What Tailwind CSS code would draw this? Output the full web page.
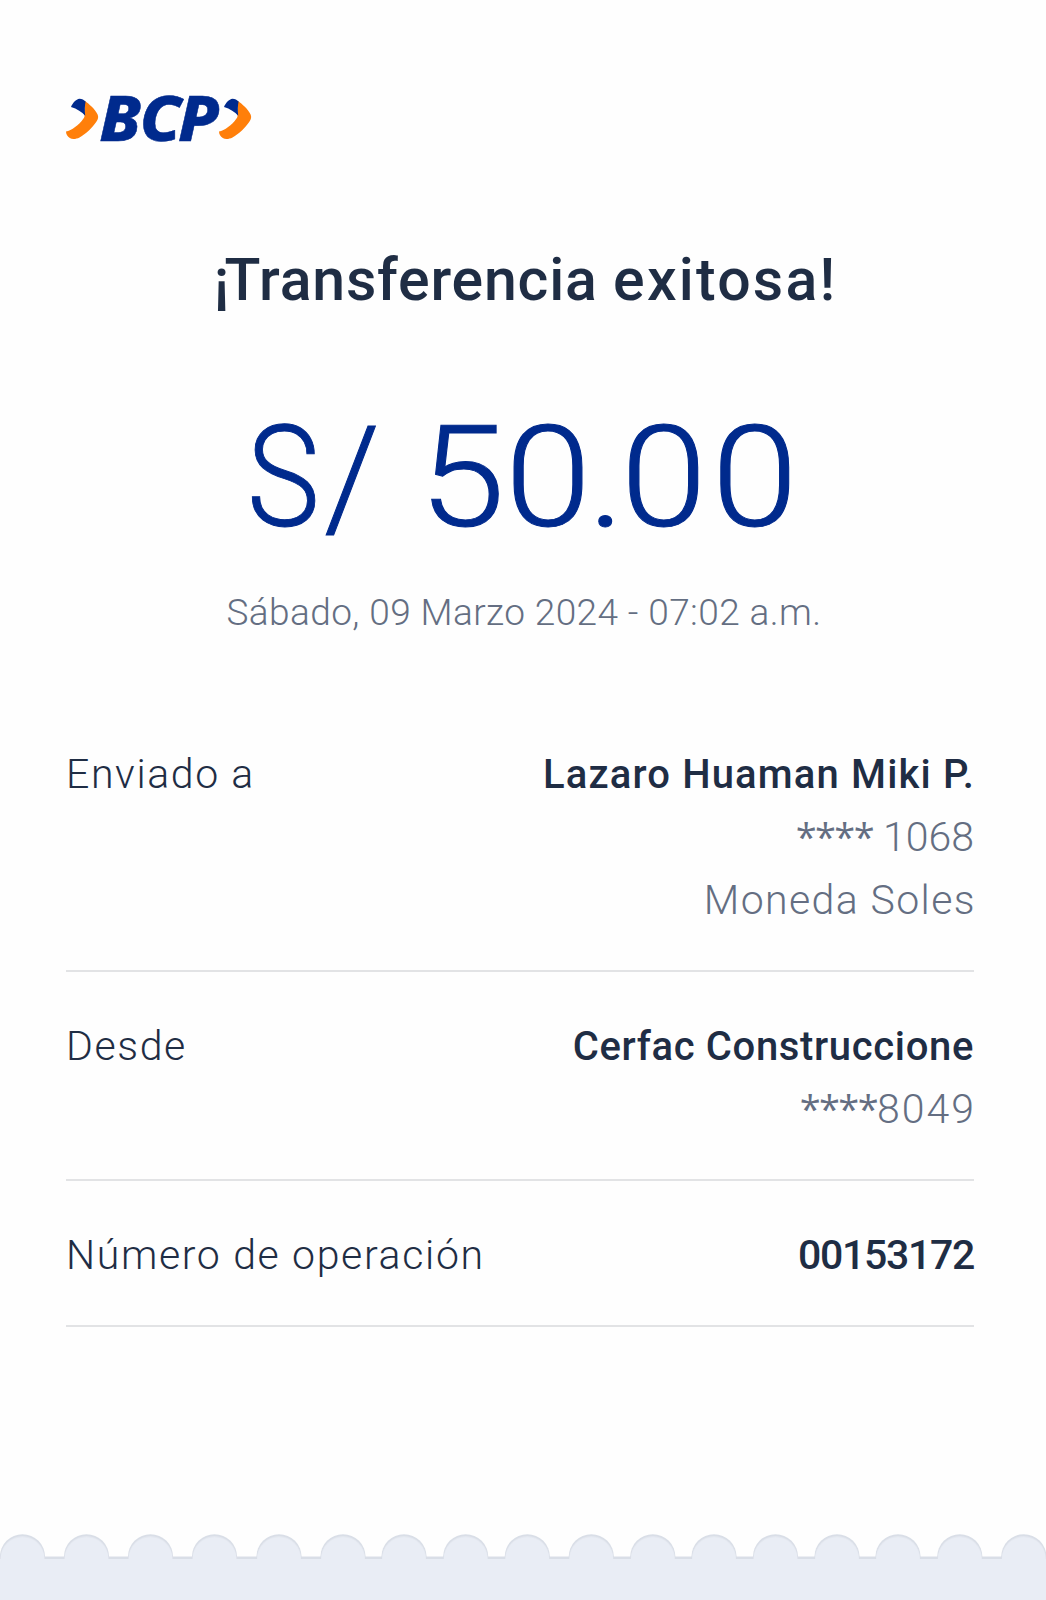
<!DOCTYPE html>
<html lang="es">
<head>
<meta charset="utf-8">
<title>Transferencia exitosa</title>
<script src="https://cdn.jsdelivr.net/npm/@tailwindcss/browser@4"></script>
</head>
<body class="bg-[#fefefe] font-['Roboto',sans-serif] text-[#1f2d44]">
<div class="w-[1046px] h-[1600px] flex flex-col overflow-hidden">
  <header class="pl-[66px] pt-[80px] h-[240px] shrink-0">
    <svg class="overflow-visible" width="190" height="80" viewBox="66 80 190 80" role="img" aria-label="BCP">
      <defs>
        <g id="mark">
          <path fill="#ff7f0a" d="M85 101C89 104 95 109 97.600 114.500C98.600 117 98.200 119 96.500 121.500C92.500 127.500 86 134 79.500 137.500C76 139.300 72 139.500 69.800 138C67.500 136.500 66 134.500 66 131.500C71.500 130.500 79 125 83.500 118.500C84.500 117 84.800 116 84.400 115Z"/>
          <path fill="#002a8d" d="M71 107C72.500 103 76 99.300 79.500 98.700C82 98.800 84 100 85.600 101.500C84.800 105.500 84.600 110 85.200 115.800C82 112 77 108.800 71 107Z"/>
        </g>
      </defs>
      <use href="#mark"/>
      <use href="#mark" x="153"/>
      <text transform="scale(1.08 1)" x="92 129.500 164.800" y="141" fill="#002a8d" stroke="#002a8d" stroke-width="0.500" font-family="Noto Sans, sans-serif" font-size="62" font-weight="800" font-style="italic">BCP</text>
    </svg>
  </header>

  <h1 class="pl-[5px] text-center text-[59px] font-medium leading-[80px] tracking-[0.8px] shrink-0"><span class="tracking-[-5px]">¡</span>Transferencia <span class="tracking-[2.2px]">exitosa!</span></h1>

  <div class="mt-[78px] pl-[247px] flex text-[141px] font-light leading-[160px] text-[#002a8d] [-webkit-text-stroke:1px_#002a8d] shrink-0">
    <span class="w-[70px] origin-left scale-x-[0.87]">S</span>
    <span class="w-[102px] pl-[7px]">/</span>
    <span class="origin-left scale-x-[1.1]">5<span class="tracking-[-3px]">0</span><span class="tracking-[-3.8px]">.</span><span class="tracking-[4.5px]">0</span>0</span>
  </div>

  <p class="mt-[31px] pl-[2px] text-center text-[37px] font-light leading-[48px] tracking-[0.4px] text-[#646e82] shrink-0">Sábado, 09 Marzo 2024 - 07:02 a.m.</p>

  <main class="mt-[106px] mx-[66px] w-[908px] text-[41px] font-light leading-[63px] shrink-0">
    <section class="flex justify-between pb-[38px] border-b-2 border-[#e2e3e5]">
      <span class="tracking-[1.6px]">Enviado a</span>
      <div class="flex flex-col items-end text-[#646e82]">
        <strong class="text-[40px] font-medium tracking-[1.15px] text-[#1f2d44] -mr-[1px]">Lazaro Huaman Miki P.</strong>
        <span><span class="font-['Open_Sans',sans-serif] text-[38px] font-normal leading-none tracking-[-1.6px]">****</span> 1068</span>
        <span class="tracking-[1.4px] -mr-[2px]">Moneda Soles</span>
      </div>
    </section>
    <section class="flex justify-between pt-[43px] pb-[38px] border-b-2 border-[#e2e3e5]">
      <span class="tracking-[1.6px]">Desde</span>
      <div class="flex flex-col items-end text-[#646e82]">
        <strong class="text-[40px] font-medium tracking-[0.65px] text-[#1f2d44]">Cerfac Construccione</strong>
        <span class="tracking-[2px] -mr-[2px]"><span class="font-['Open_Sans',sans-serif] text-[38px] font-normal leading-none tracking-[-1.6px]">****</span>8049</span>
      </div>
    </section>
    <section class="flex justify-between pt-[43px] pb-[38px] border-b-2 border-[#e2e3e5]">
      <span class="tracking-[1.65px]">Número de operación</span>
      <strong class="font-medium tracking-[-1.3px]">00153172</strong>
    </section>
  </main>

  <footer class="mt-auto h-[68px] shrink-0">
    <svg class="block" width="1046" height="68" viewBox="0 0 1046 68" aria-hidden="true">
      <rect y="24.500" width="1046" height="4" fill="#d9dee7"/>
      <g id="scallops"></g>
      <rect y="27" width="1046" height="41" fill="#e9edf5"/>
    </svg>
  </footer>
</div>
<script>
  // Scalloped ticket edge: a shaded rim with the footer colour over it
  const centers = [22.5, 86.5, 150.5, 214.5, 279, 343, 404, 465.7, 527.3, 591.3, 652.8, 714, 775.5, 837, 898, 959.8, 1023.8];
  const disc = (x, y, r, fill) => `<circle cx="${x}" cy="${y}" r="${r}" fill="${fill}"/>`;
  document.getElementById('scallops').innerHTML = centers.map(x =>
    disc(x, 24.8, 22.6, '#d9dee7') + disc(x, 26, 22, '#e3e7ef') + disc(x, 27, 21.8, '#e9edf5')).join('');
</script>
</body>
</html>
